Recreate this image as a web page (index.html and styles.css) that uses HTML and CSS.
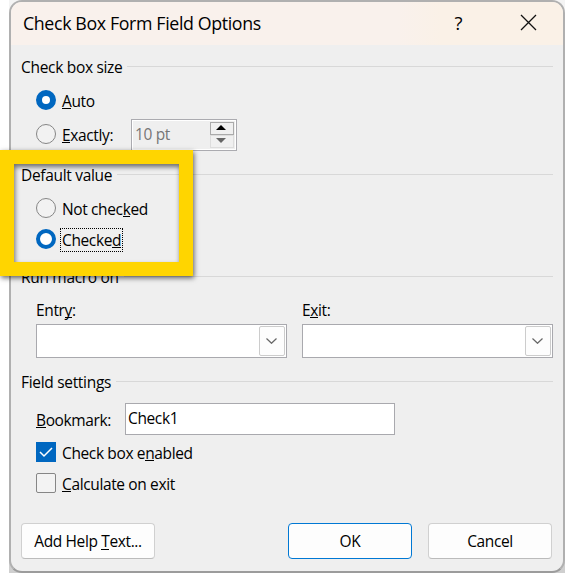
FILE: index.html
```html
<!DOCTYPE html>
<html lang="en">
<head>
<meta charset="utf-8">
<title>Check Box Form Field Options</title>
<link rel="stylesheet" href="styles.css">
</head>
<body>
<main class="dialog">
  <header class="titlebar">
    <h1>Check Box Form Field Options</h1>
    <span class="help">?</span>
    <svg class="close" width="17" height="17" viewBox="0 0 17 17"><path d="M1 1 16 16M16 1 1 16"/></svg>
  </header>
  <div class="content">
    <section class="size">
      <h2>Check box size</h2>
      <div class="row auto"><i class="radio on"></i><span><u>A</u>uto</span></div>
      <div class="row exact"><i class="radio"></i><span class="exact-label"><u>E</u>xactly:</span>
        <div class="spin"><span>10 pt</span>
          <div class="arrows">
            <b><svg width="10" height="5" viewBox="0 0 10 5"><path d="M0 5 5 0 10 5z"/></svg></b>
            <b class="down"><svg width="10" height="5" viewBox="0 0 10 5"><path d="M0 0 5 5 10 0z"/></svg></b>
          </div>
        </div>
      </div>
    </section>
    <section class="default">
      <h2>Default value</h2>
      <div class="row"><i class="radio"></i><span>Not chec<u>k</u>ed</span></div>
      <div class="row"><i class="radio on hover"></i><span class="focus">Checke<u>d</u></span></div>
    </section>
    <section class="macro">
      <h2>Run macro on</h2>
      <div class="pair">
        <div><label>Entr<u>y</u>:</label><div class="select"><b><svg width="11" height="6" viewBox="0 0 11 6"><path d="M.5.5 5.5 5.3 10.5.5"/></svg></b></div></div>
        <div><label>E<u>x</u>it:</label><div class="select"><b><svg width="11" height="6" viewBox="0 0 11 6"><path d="M.5.5 5.5 5.3 10.5.5"/></svg></b></div></div>
      </div>
    </section>
    <section class="settings">
      <h2>Field settings</h2>
      <div class="bookmark"><label><u>B</u>ookmark:</label><div class="input">Check1</div></div>
      <div class="row"><i class="box checked"><svg width="20" height="20" viewBox="0 0 20 20"><path d="M4 10 8 14 16 6"/></svg></i><span class="enabled">Check box e<u>n</u>abled</span></div>
      <div class="row"><i class="box"></i><span><u>C</u>alculate on exit</span></div>
    </section>
    <footer>
      <div class="button add"><span>Add Help <u>T</u>ext...</span></div>
      <div class="button primary">OK</div>
      <div class="button">Cancel</div>
    </footer>
  </div>
</main>
<div class="highlight"></div>
</body>
</html>
```
FILE: styles.css
```css
* { box-sizing: border-box; }
html, body { margin: 0; height: 100%; overflow: hidden; }
body {
  position: relative;
  background: linear-gradient(90deg, #fff 9px, transparent 9px), linear-gradient(#f4f4f4, #cfcfcf);
  color: #000;
  font: 15.5px/20px "Open Sans", "Noto Sans", sans-serif;
  letter-spacing: -0.37px;
  white-space: nowrap;
}
i, b { display: block; font-style: normal; flex: none; }
u { text-decoration: none; box-shadow: inset 0 -1px #000; display: inline-block; height: 18px; line-height: 20px; vertical-align: top; }
.dialog {
  margin-left: 9px;
  width: 556px;
  height: 573px;
  border: 2px solid #b0b0b0;
  border-bottom-color: #9c9c9c;
  border-radius: 13px;
  background: #efefef;
  overflow: hidden;
}
.titlebar {
  display: flex;
  align-items: center;
  height: 43px;
  padding: 0 26px 2px 12px;
  background: linear-gradient(90deg, #f9f1ec 0 70%, #faf1e7 78%);
}
h1 { margin: 0; flex: 1; font-size: 17.8px; font-weight: 400; letter-spacing: -0.37px; }
.help { font-size: 18.5px; margin-right: 58px; }
.close { fill: none; stroke: #111; stroke-width: 1.3; margin-top: -1px; }
.content { padding: 12px 10px 0; }
h2 {
  display: flex;
  align-items: center;
  gap: 5px;
  height: 20px;
  margin: 0;
  font-size: 15.5px;
  font-weight: 400;
  letter-spacing: -0.31px;
}
h2::after { content: ""; flex: 1; height: 1px; background: #d8d8d8; margin-top: -2px; }
.row { display: flex; align-items: center; gap: 6px; height: 20px; margin: 0 0 11px 15px; }
.row > span { position: relative; top: 1px; }
.radio { width: 20px; height: 20px; border: 1px solid #868686; border-radius: 50%; background: #f2f2f2; }
.radio.on { border: 6px solid #0067c0; background: #fff; }
.radio.hover { border-width: 4px; }
.focus { outline: 1px dotted #000; outline-offset: 1px; }
.size { height: 108px; }
.auto { margin: 13px 0 14px 15px; }
.exact-label { width: 63px; }
.spin {
  display: flex;
  width: 106px;
  height: 32px;
  padding: 2px;
  border: 1px solid #ababb0;
  background: #efefef;
  box-shadow: inset 0 0 0 1px #fff;
  color: #767676;
  margin-top: 2px;
}
.spin > span { flex: 1; line-height: 22px; padding: 1px 0 0 1px; }
.arrows { width: 24px; }
.arrows b { height: 13px; display: flex; align-items: center; justify-content: center; border: 1px solid #aaa; background: #f0f0f0; }
.arrows svg { position: relative; left: -1px; top: -1px; }
.arrows .down { border-color: #ddd; fill: #666; }
.default { height: 102px; }
.default h2 { margin-bottom: 13px; }
.macro { height: 105px; }
.pair { display: flex; gap: 15px; margin: 13px 0 0 15px; }
.pair > div { width: 251px; }
.pair label { display: block; height: 24px; line-height: 20px; }
.select { height: 34px; border: 1px solid #a9a9ae; background: #fff; padding: 1px; display: flex; justify-content: flex-end; }
.select b { width: 26px; height: 30px; border: 1px solid #ccc; border-radius: 2px; background: #fdfdfd; display: flex; align-items: center; justify-content: center; padding-right: 2px; }
.select svg { fill: none; stroke: #666; stroke-width: 1.2; }
.bookmark { display: flex; align-items: center; margin: 11px 0 7px 15px; }
.bookmark label { width: 89px; padding-top: 1px; }
.input { width: 270px; height: 32px; border: 1px solid #a9a9ae; background: #fff; padding: 4px 2px; }
.box { width: 20px; height: 20px; border: 1px solid #868686; border-radius: 2px; background: #f3f3f3; }
.box.checked { border: 0; background: #0067c0; border-radius: 0; }
.box svg { display: block; fill: none; stroke: #fff; stroke-width: 1.5; }
footer { display: flex; gap: 16px; margin-top: 30px; }
.button { width: 124px; height: 36px; border: 1px solid #d0d0d0; border-bottom-color: #bbb; border-radius: 4px; background: #fdfdfd; line-height: 35px; text-align: center; }
.button u { height: 26px; line-height: 35px; }
.button.add { width: 134px; margin-right: 117px; }
.button.primary { border-color: #0078d4; }
.highlight {
  position: absolute;
  left: 0;
  top: 150px;
  width: 193px;
  height: 126px;
  border: 14px solid #ffd500;
  box-shadow: 1px 2px 5px rgba(0,0,0,.6), inset 1px 3px 5px rgba(0,0,0,.55);
}
```
